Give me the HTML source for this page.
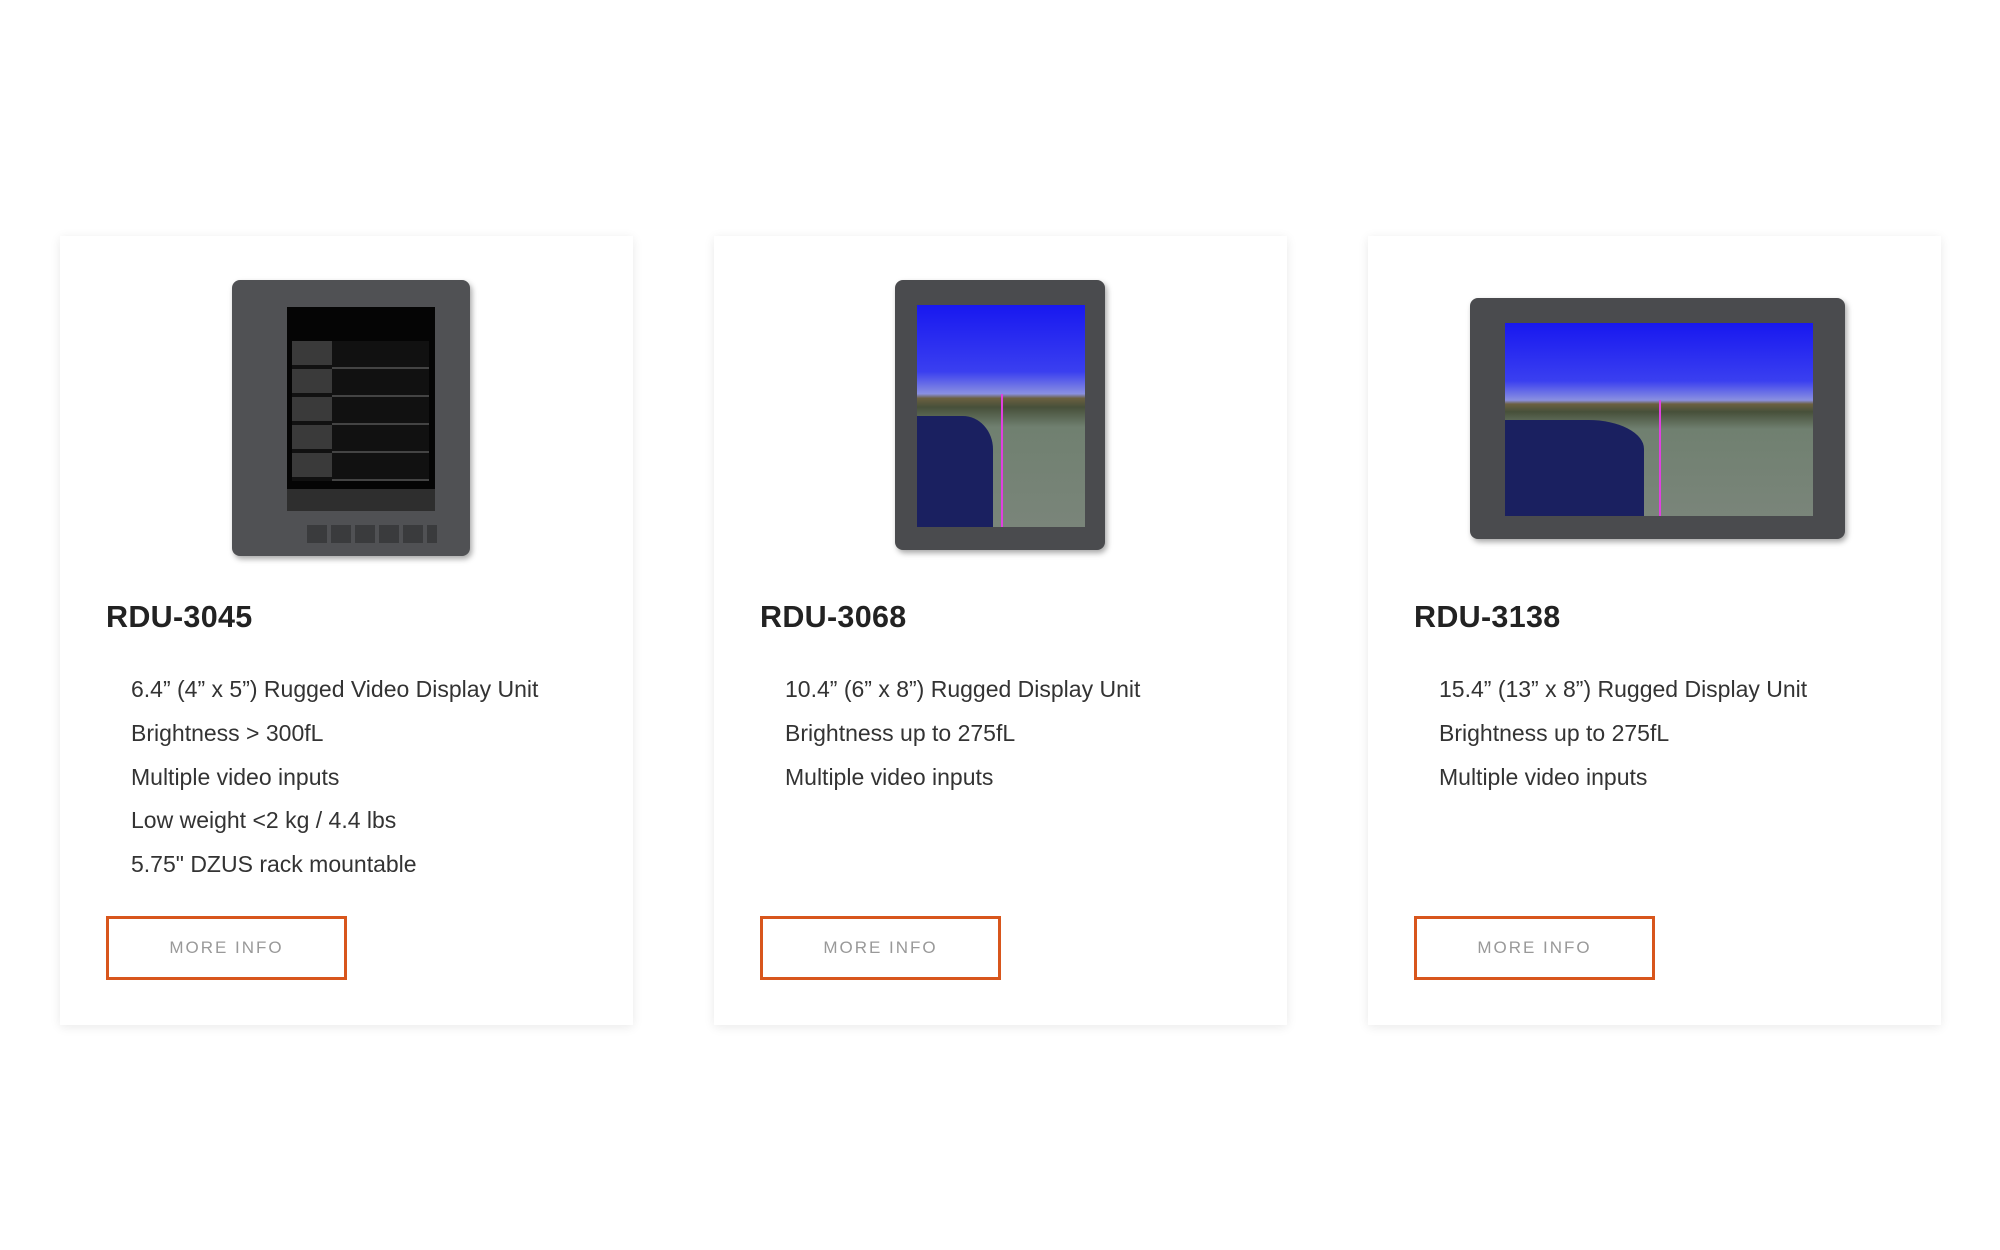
<!DOCTYPE html>
<html><head><meta charset="utf-8"><style>
body{margin:0;width:2000px;height:1250px;background:#fff;font-family:"Liberation Sans",sans-serif;position:relative;overflow:hidden}
.card{position:absolute;top:236px;width:573px;height:789px;background:#fff;box-shadow:0 2px 10px rgba(0,0,0,0.09)}
h2{position:absolute;left:46px;top:364px;margin:0;font-size:30.5px;font-weight:bold;color:#222;letter-spacing:0.3px}
ul{position:absolute;left:71px;top:432px;margin:0;padding:0;list-style:none;font-size:23px;color:#333;line-height:43.8px}
.btn{position:absolute;left:46px;top:683px;width:235px;height:58px;border:3px solid #d8561c;color:#999;font-size:17px;letter-spacing:2px;text-align:center;line-height:58px;box-sizing:content-box;margin-top:-3px}
.dev{position:absolute;background:#4a4b4e;border-radius:8px;box-shadow:2px 3px 6px rgba(0,0,0,.35)}
.scr{position:absolute;overflow:hidden}
.pfd{background:linear-gradient(180deg,#1818f0 0%,#3a3ff0 30%,#8a90e0 40%,#6b6040 42%,#47503a 46%,#708070 55%,#7a857a 100%)}
.nav{position:absolute;left:0;bottom:0;width:45%;height:50%;background:#1a2060;border-top-right-radius:40% 30%}
.mag{position:absolute;left:50%;top:0;bottom:0;width:2px;background:#e040e0}
</style></head><body>

<div class="card" style="left:60px">
 <div class="dev" style="left:172px;top:44px;width:238px;height:276px;background:#505154">
  <div class="scr" style="left:55px;top:27px;width:148px;height:204px;background:#050505">
   <div style="position:absolute;left:5px;top:34px;width:137px;height:140px;background:repeating-linear-gradient(180deg,#111 0 26px,#444 26px 28px)"></div>
   <div style="position:absolute;left:5px;top:34px;width:40px;height:140px;background:repeating-linear-gradient(180deg,#3a3a3a 0 24px,#111 24px 28px)"></div>
   <div style="position:absolute;left:0;bottom:0;width:148px;height:22px;background:#2e2e2e"></div>
  </div>
  <div style="position:absolute;left:75px;top:245px;width:130px;height:18px;background:repeating-linear-gradient(90deg,#3a3b3d 0 20px,#505154 20px 24px)"></div>
 </div>
 <h2>RDU-3045</h2>
 <ul><li>6.4” (4” x 5”) Rugged Video Display Unit</li><li>Brightness &gt; 300fL</li><li>Multiple video inputs</li><li>Low weight &lt;2 kg / 4.4 lbs</li><li>5.75" DZUS rack mountable</li></ul>
 <div class="btn">MORE INFO</div>
</div>

<div class="card" style="left:714px">
 <div class="dev" style="left:181px;top:44px;width:210px;height:270px">
  <div class="scr pfd" style="left:22px;top:25px;width:168px;height:222px"><div class="nav"></div><div class="mag" style="top:40%"></div></div>
 </div>
 <h2>RDU-3068</h2>
 <ul><li>10.4” (6” x 8”) Rugged Display Unit</li><li>Brightness up to 275fL</li><li>Multiple video inputs</li></ul>
 <div class="btn">MORE INFO</div>
</div>

<div class="card" style="left:1368px">
 <div class="dev" style="left:102px;top:62px;width:375px;height:241px">
  <div class="scr pfd" style="left:35px;top:25px;width:308px;height:193px"><div class="nav"></div><div class="mag" style="top:40%"></div></div>
 </div>
 <h2>RDU-3138</h2>
 <ul><li>15.4” (13” x 8”) Rugged Display Unit</li><li>Brightness up to 275fL</li><li>Multiple video inputs</li></ul>
 <div class="btn">MORE INFO</div>
</div>

</body></html>
